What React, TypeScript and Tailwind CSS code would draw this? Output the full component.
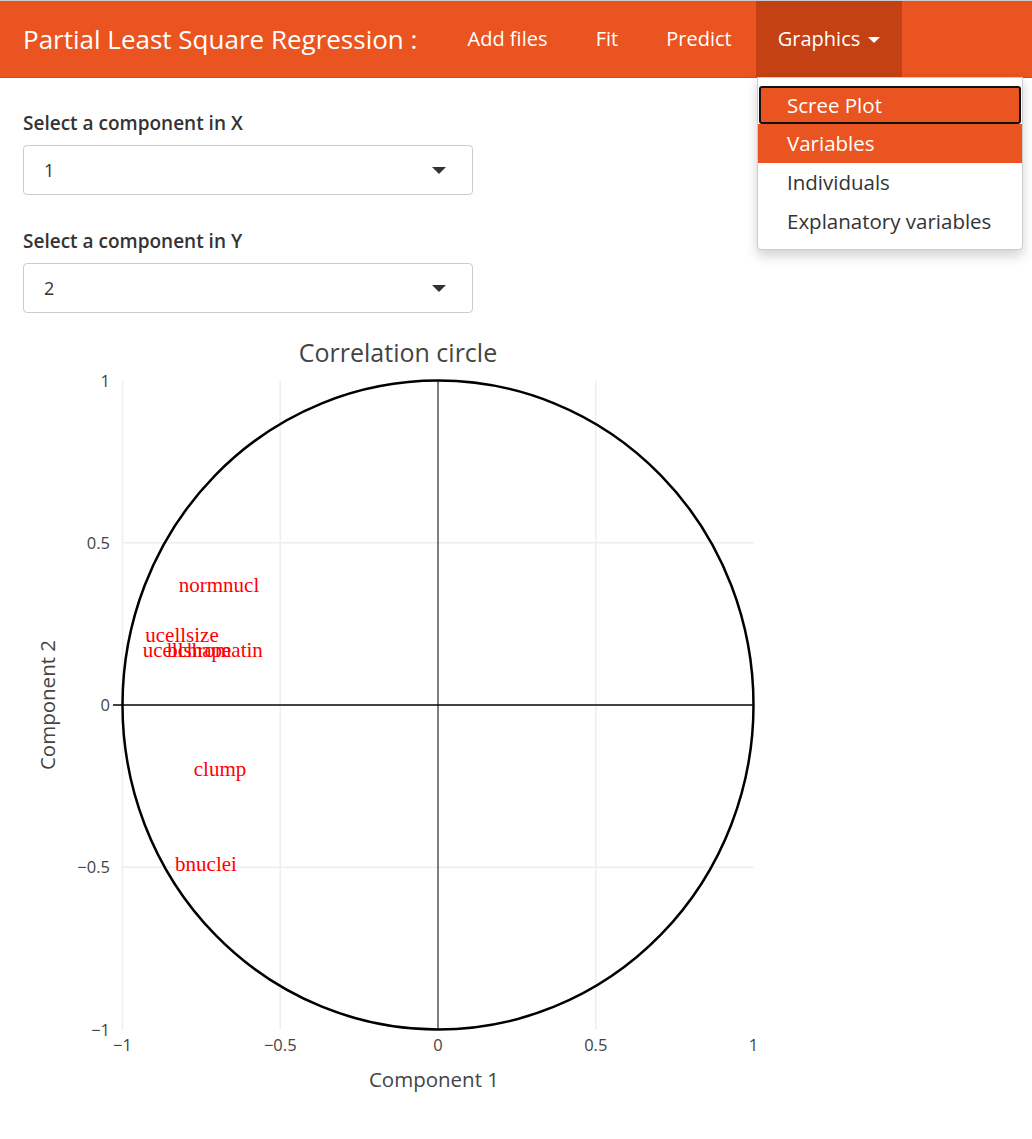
import React from 'react';

const NavItem: React.FC<{ label: string; w: string; active?: boolean; caret?: boolean; children?: React.ReactNode }> = ({
  label,
  w,
  active,
  caret,
  children,
}) => (
  <div className={`relative flex h-full items-center justify-center ${w} ${active ? 'bg-[#c34113]' : ''}`}>
    <span className="text-[20px] text-white">{label}</span>
    {caret && (
      <span className="ml-[8px] mt-[2px] inline-block h-0 w-0 border-x-[6px] border-t-[6px] border-x-transparent border-t-white" />
    )}
    {children}
  </div>
);

const SelectBox: React.FC<{ label: string; value: string; first?: boolean }> = ({ label, value, first }) => (
  <div className={first ? 'pt-[33px]' : 'pt-[34px]'}>
    <div className="text-[19px] font-semibold leading-[24px] text-[#333]">{label}</div>
    <div className="mt-[10px] flex h-[50px] w-[450px] items-center justify-between rounded-[4px] border border-[#ccc] bg-white pl-[20px] pr-[26px]">
      <span className="text-[18px] text-[#333]">{value}</span>
      <span className="inline-block h-0 w-0 border-x-[7px] border-t-[7px] border-x-transparent border-t-[#333]" />
    </div>
  </div>
);

// page coordinates of the plot
const X0 = 438;
const Y0 = 706;
const SX = 315.5;
const SY = 324.5;
const px = (v: number) => X0 + v * SX;
const py = (v: number) => Y0 - v * SY;

const labels = [
  { t: 'normnucl', x: 219, y: 587 },
  { t: 'ucellsize', x: 182, y: 637 },
  { t: 'ucellshape', x: 187, y: 652 },
  { t: 'bchromatin', x: 215, y: 652 },
  { t: 'clump', x: 220, y: 771 },
  { t: 'bnuclei', x: 206, y: 866 },
];

const ticks = [-1, -0.5, 0, 0.5, 1];
const fmt = (v: number) => (v < 0 ? '\u2212' + Math.abs(v) : String(v));

const CorrelationCircle: React.FC = () => (
  <svg width={800} height={780} viewBox="0 330 800 780" className="block">
    <g fontFamily="'Open Sans', 'Liberation Sans', sans-serif" fill="#444">
      {/* grid */}
      {[-1, -0.5, 0.5].map((v) => (
        <line key={`gx${v}`} x1={px(v)} x2={px(v)} y1={py(1)} y2={py(-1)} stroke="#eee" strokeWidth={1.5} />
      ))}
      {[-0.5, 0.5].map((v) => (
        <line key={`gy${v}`} x1={px(-1)} x2={px(1)} y1={py(v)} y2={py(v)} stroke="#eee" strokeWidth={1.5} />
      ))}
      {/* zero lines */}
      <line x1={113} x2={px(1)} y1={Y0} y2={Y0} stroke="#444" strokeWidth={2} />
      <line x1={X0} x2={X0} y1={py(1)} y2={py(-1)} stroke="#000" strokeWidth={1} />
      {/* circle */}
      <ellipse cx={X0} cy={Y0} rx={SX} ry={SY} fill="none" stroke="#000" strokeWidth={2.5} />

      {/* ticks */}
      {ticks.map((v) => (
        <text key={`ty${v}`} x={110} y={py(v) + 6} textAnchor="end" fontSize={16.5}>
          {fmt(v)}
        </text>
      ))}
      {ticks.map((v) => (
        <text key={`tx${v}`} x={px(v)} y={1052} textAnchor="middle" fontSize={16.5}>
          {fmt(v)}
        </text>
      ))}

      <text x={398} y={363} textAnchor="middle" fontSize={25}>
        Correlation circle
      </text>
      <text x={434} y={1088} textAnchor="middle" fontSize={20.5}>
        Component 1
      </text>
      <text x={55} y={706} textAnchor="middle" fontSize={20.5} transform="rotate(-90 55 706)">
        Component 2
      </text>
    </g>
    <g fontFamily="'Liberation Serif', 'Times New Roman', serif" fill="#ff0000" fontSize={21}>
      {labels.map((l) => (
        <text key={l.t} x={l.x} y={l.y + 6} textAnchor="middle">
          {l.t}
        </text>
      ))}
    </g>
  </svg>
);

export default function App() {
  return (
    <div className="min-h-[1139px] w-full bg-white font-['Open_Sans','Liberation_Sans',sans-serif]">
      <nav className="flex h-[78px] items-stretch border-t border-b border-t-[#ccc] border-b-[#d34a1b] bg-[#e95420]">
        <div className="flex w-[443px] items-center pl-[23px]">
          <span className="text-[26px] text-white">Partial Least Square Regression :</span>
        </div>
        <NavItem label="Add files" w="w-[129px]" />
        <NavItem label="Fit" w="w-[70px]" />
        <NavItem label="Predict" w="w-[114px]" />
        <NavItem label="Graphics" w="w-[146px]" active caret>
          <div className="absolute left-[1px] top-full z-10 w-[266px] rounded-b-[4px] border border-[#ccc] bg-white pb-[8px] pt-[8px] shadow-[0_6px_12px_rgba(0,0,0,0.175)]">
            <div className="mx-[1px] flex h-[38px] items-center rounded-[3px] border-2 border-[#111] bg-[#e95420] pl-[26px] text-[20.5px] text-white">
              Scree Plot
            </div>
            <div className="flex h-[39px] items-center bg-[#e95420] pl-[29px] text-[20.5px] text-white">Variables</div>
            <div className="flex h-[39px] items-center pl-[29px] text-[20.5px] text-[#333]">Individuals</div>
            <div className="flex h-[39px] items-center pl-[29px] text-[20.5px] text-[#333]">Explanatory variables</div>
          </div>
        </NavItem>
      </nav>

      <div className="px-[23px]">
        <SelectBox label="Select a component in X" value="1" first />
        <SelectBox label="Select a component in Y" value="2" />
      </div>

      <div className="mt-[16px]">
        <CorrelationCircle />
      </div>
    </div>
  );
}
